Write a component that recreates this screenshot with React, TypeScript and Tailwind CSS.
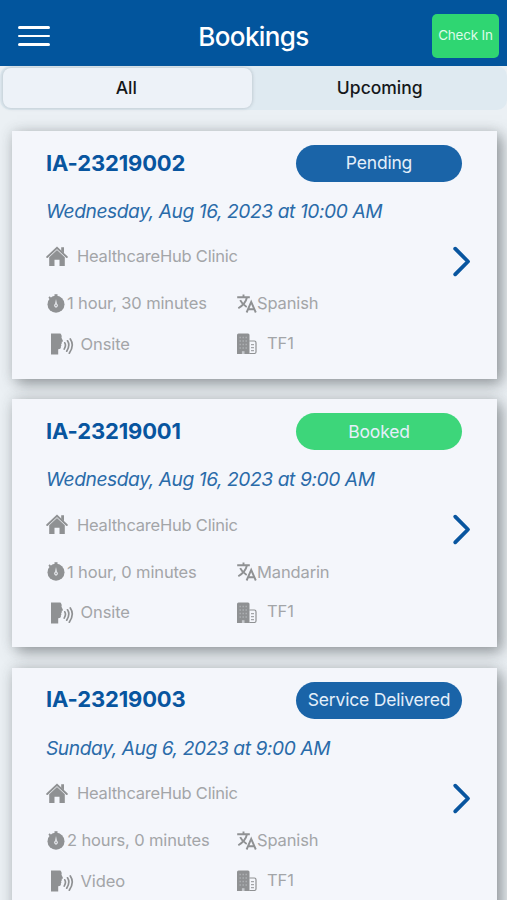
type Booking = {
  id: string;
  status: "Pending" | "Booked" | "Service Delivered";
  date: string;
  clinic: string;
  duration: string;
  language: string;
  mode: string;
  room: string;
};

const bookings: Booking[] = [
  {
    id: "IA-23219002",
    status: "Pending",
    date: "Wednesday, Aug 16, 2023 at 10:00 AM",
    clinic: "HealthcareHub Clinic",
    duration: "1 hour, 30 minutes",
    language: "Spanish",
    mode: "Onsite",
    room: "TF1",
  },
  {
    id: "IA-23219001",
    status: "Booked",
    date: "Wednesday, Aug 16, 2023 at 9:00 AM",
    clinic: "HealthcareHub Clinic",
    duration: "1 hour, 0 minutes",
    language: "Mandarin",
    mode: "Onsite",
    room: "TF1",
  },
  {
    id: "IA-23219003",
    status: "Service Delivered",
    date: "Sunday, Aug 6, 2023 at 9:00 AM",
    clinic: "HealthcareHub Clinic",
    duration: "2 hours, 0 minutes",
    language: "Spanish",
    mode: "Video",
    room: "TF1",
  },
];

// House with a detached roof line and chimney
function HouseIcon() {
  return (
    <svg className="h-[21px] w-[22px] shrink-0" viewBox="0 0 22 21" fill="none">
      <path d="M1.200 11 11 1.800 20.800 11" stroke="#8f9193" strokeWidth="1.900" strokeLinecap="round" />
      <path d="M15.200 1.200h2.800v6.200l-2.800-2.600z" fill="#8f9193" />
      <path d="M3.200 11.300 11 4l7.800 7.300V20h-5.300v-6.300h-5V20H3.200z" fill="#8f9193" />
    </svg>
  );
}

// Stopwatch with a crown, a side button and a needle
function StopwatchIcon() {
  return (
    <svg className="h-[21px] w-5 shrink-0" viewBox="0 0 20 21" fill="none">
      <circle cx="10" cy="11.200" r="8.500" fill="#8f9193" />
      <path d="M8.500 1.200h3v2.500h-3z" fill="#8f9193" />
      <path d="M3 4 4.800 5.800" stroke="#8f9193" strokeWidth="1.800" />
      <path d="M10 6 11.100 10.800a2 2 0 1 1-2.200 0z" fill="#dcdee2" />
      <circle cx="10" cy="12.400" r=".7" fill="#8f9193" />
    </svg>
  );
}

// CJK character overlapping a Latin capital
function TranslateIcon() {
  return (
    <svg className="h-[21px] w-[21px] shrink-0" viewBox="0 0 21 21" fill="none" stroke="#8f9193" strokeWidth="1.900">
      <path d="M1.200 4.300h12.600M7.500 1.500v2.800M11 4.300q-1.500 6.700-8.700 11M4.200 7.200q1.800 4 6.500 6.800" />
      <path d="M10.600 19.500 15.200 8.800l4.600 10.700M12 16.200h6.400" />
    </svg>
  );
}

// Face in profile with sound waves
function SpeakingIcon() {
  return (
    <svg className="h-[22px] w-6 shrink-0" viewBox="0 0 24 22" fill="none">
      <path
        d="M0 .5h9.400c1.200 1.200 1.600 2.700 1.100 4.300l1.400 3c.2.600-.1.900-1.200 1l.2 1.500-.9.900.6 1-.7.700c.3 2.300-.6 3.200-2.700 3.300V21.500H0z"
        fill="#8f9193"
      />
      <path
        d="M13.800 9.800q1.600 2.800-.6 6.300M16.500 7.800q3 4.600-.8 10.400M19.300 6q4.400 6.500-1 14.200"
        stroke="#8f9193"
        strokeWidth="1.700"
        strokeLinecap="round"
      />
    </svg>
  );
}

// Tall filled tower with a smaller outlined block beside it
function BuildingIcon() {
  return (
    <svg className="h-[22px] w-5 shrink-0" viewBox="0 0 20 22" fill="none">
      <path d="M0 2Q0 .5 1.500 .5h9.500q1.500 0 1.500 1.500V21H0z" fill="#8f9193" />
      <path
        d="M2.500 4.500h1.400M5.500 4.500h1.400M8.500 4.500h1.400M2.500 8h1.400M5.500 8h1.400M8.500 8h1.400M2.500 11.500h1.400M5.500 11.500h1.400M8.500 11.500h1.400M2.500 15h1.400M5.500 15h1.400M8.500 15h1.400"
        stroke="#aeb1b4"
        strokeWidth="1.300"
      />
      <path d="M4.900 21v-2.800h2.600V21" fill="#c5c8cc" />
      <path d="M12.300 8h5q1.700 0 1.700 1.700V19q0 1.500-1.700 1.500h-5" stroke="#8f9193" strokeWidth="1.200" />
      <path d="M14 11.700h3M14 14.700h3M14 17.700h3" stroke="#a3a5a8" strokeWidth="1.200" />
    </svg>
  );
}

function BookingCard({ booking }: { booking: Booking }) {
  return (
    <article className="flex h-[248px] shrink-0 bg-[#f4f6fb] pt-3.5 pl-[34px] text-[#a3a5a8] shadow-[5px_5px_14px_rgba(70,75,80,0.5),0_0_12px_rgba(70,75,80,0.14)]">
      <div className="w-[416px] shrink-0">
        <div className="flex h-[37px] items-center justify-between">
          <h2 className="-mt-px text-[22px] font-bold tracking-[-0.15px] text-[#08559f]">{booking.id}</h2>
          <span
            className={`flex h-[37px] w-[166px] items-center justify-center rounded-full text-[17.5px] tracking-[-0.2px] text-[#e4effa] ${
              booking.status === "Booked" ? "bg-[#3dd67a]" : "bg-[#1a64a8]"
            }`}
          >
            {booking.status}
          </span>
        </div>
        <p className="flex h-[58px] items-center pt-px text-[19.2px] tracking-[-0.42px] whitespace-nowrap text-[#2a6ba9] italic">
          {booking.date}
        </p>
        <p className="flex h-[33px] items-center text-[16.5px] tracking-[-0.22px]">
          <span className="mr-[9px]">
            <HouseIcon />
          </span>
          {booking.clinic}
        </p>
        <div className="grid h-[61px] grid-cols-[190px_1fr] items-center text-[16.5px] tracking-[-0.13px]">
          <p className="flex items-center whitespace-nowrap">
            <span className="mr-px flex">
              <StopwatchIcon />
            </span>
            {booking.duration}
          </p>
          <p className="flex items-center">
            <TranslateIcon />
            {booking.language}
          </p>
        </div>
        <div className="-mt-[2px] grid h-5 grid-cols-[191px_1fr] items-center text-[16.5px] tracking-[-0.1px]">
          <p className="flex items-center">
            <span className="mr-1.5 ml-[5px] flex w-[23.5px]">
              <SpeakingIcon />
            </span>
            {booking.mode}
          </p>
          <p className="flex items-center gap-2.5">
            <BuildingIcon />
            <span className="-mt-[2px]">{booking.room}</span>
          </p>
        </div>
      </div>
      <svg
        className="mt-[100px] -ml-[10px] h-8 w-5"
        viewBox="0 0 20 32"
        fill="none"
        stroke="#08559f"
        strokeWidth="3.800"
        strokeLinecap="round"
        strokeLinejoin="round"
      >
        <path d="M3.200 3.700 16 16.500 3.200 29.300" />
      </svg>
    </article>
  );
}

export default function App() {
  return (
    <div className="flex h-[900px] w-[507px] flex-col overflow-hidden bg-[#ebf0f4] font-['Inter',sans-serif]">
      <header className="grid h-[66px] shrink-0 grid-cols-[1fr_auto_1fr] items-center bg-[#02559d] px-2 pt-[6px]">
        <button aria-label="Menu" className="ml-[10px] flex w-8 flex-col gap-[6px]">
          <span className="h-[2.500px] rounded-full bg-white" />
          <span className="h-[2.500px] rounded-full bg-white" />
          <span className="h-[2.500px] rounded-full bg-white" />
        </button>
        <h1 className="text-[26px] font-[550] tracking-[-0.6px] text-white">Bookings</h1>
        <button className="h-11 w-[67px] justify-self-end rounded-[5px] bg-[#2fd672] pb-px text-[13.5px] tracking-[-0.2px] whitespace-nowrap text-[#dcfbe8]">
          Check In
        </button>
      </header>
      <nav className="grid h-11 shrink-0 grid-cols-2 rounded-[10px] bg-[#dfeaf1] text-[17.5px] font-[450] text-[#15181b]">
        <button className="my-[2px] mr-[2px] ml-[3px] rounded-lg bg-[#edf2f8] pr-[2px] shadow-[0_0_3px_1px_rgba(130,140,148,0.3)]">
          All
        </button>
        <button className="pr-px">Upcoming</button>
      </nav>
      <main className="mt-[21px] flex flex-col gap-[20.4px] pr-[10px] pl-3">
        {bookings.map((b) => (
          <BookingCard key={b.id} booking={b} />
        ))}
      </main>
    </div>
  );
}
